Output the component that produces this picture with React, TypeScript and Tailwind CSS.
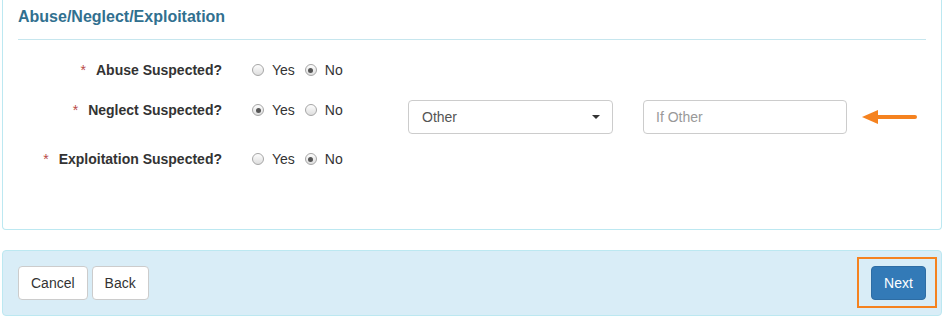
import { useState } from "react";

type Choice = "yes" | "no";

const questions: { key: string; label: string; value: Choice }[] = [
  { key: "abuse", label: "Abuse Suspected?", value: "no" },
  { key: "neglect", label: "Neglect Suspected?", value: "yes" },
  { key: "exploitation", label: "Exploitation Suspected?", value: "no" },
];

function Radio({ checked }: { checked: boolean }) {
  return (
    <span className="flex h-[12px] w-[12px] items-center justify-center rounded-full border border-[#a6a6a6] bg-gradient-to-b from-[#fdfdfd] to-[#dedede]">
      {checked && <span className="h-[5px] w-[5px] rounded-full bg-[#555]" />}
    </span>
  );
}

function YesNo({ value, onChange }: { value: Choice; onChange: (v: Choice) => void }) {
  return (
    <div className="flex h-5 w-[156px] shrink-0 items-center gap-[10px]">
      {(["yes", "no"] as Choice[]).map((opt) => (
        <label key={opt} className="flex cursor-pointer items-center gap-2" onClick={() => onChange(opt)}>
          <Radio checked={value === opt} />
          <span className="text-[14px] leading-5 text-[#333]">{opt === "yes" ? "Yes" : "No"}</span>
        </label>
      ))}
    </div>
  );
}

export default function App() {
  const [answers, setAnswers] = useState<Record<string, Choice>>(
    Object.fromEntries(questions.map((q) => [q.key, q.value]))
  );

  return (
    <div className="min-h-[321px] bg-white pl-[2px] pr-[10px] font-['Liberation_Sans',Arial,sans-serif]">
      {/* Section panel — top edge is scrolled out of view */}
      <div className="h-[230px] rounded-b-[4px] border-x border-b border-[#bce8f1] px-[15px]">
        <div className="border-b border-[#c6e6ee] pt-[7px] pb-[12px]">
          <h3 className="text-[16px] leading-5 font-bold text-[#31708f]">Abuse/Neglect/Exploitation</h3>
        </div>

        <div className="pt-5">
          {questions.map((q, i) => (
            <div key={q.key} className={i === 0 ? "mb-5 flex" : i === 1 ? "mb-[15px] flex" : "flex"}>
              <div className="flex w-[204px] shrink-0 justify-end gap-[10px] text-[14px] leading-5">
                <span className="text-[#b94a48]">*</span>
                <span className="font-bold text-[#333]">{q.label}</span>
              </div>
              <div className="ml-[30px] flex items-start">
                <YesNo
                  value={answers[q.key]}
                  onChange={(v) => setAnswers((a) => ({ ...a, [q.key]: v }))}
                />
                {q.key === "neglect" && answers.neglect === "yes" && (
                  <div className="flex items-center">
                    <div className="flex h-[34px] w-[205px] items-center justify-between rounded-[4px] border border-[#ccc] bg-white pr-[12px] pl-[13px] text-[14px] text-[#555]">
                      <span>Other</span>
                      <span className="h-0 w-0 border-x-[4px] border-t-[4px] border-x-transparent border-t-[#333]" />
                    </div>
                    <input
                      placeholder="If Other"
                      className="ml-[30px] h-[34px] w-[204px] rounded-[4px] border border-[#ccc] px-[12px] text-[14px] text-[#555] outline-none placeholder:text-[#999]"
                    />
                    <svg className="ml-[15px]" width="56" height="16" viewBox="0 0 56 16">
                      <path d="M14 8 H53" stroke="#f5821f" strokeWidth="4" strokeLinecap="round" />
                      <path d="M0 8 L16 1 L16 15 Z" fill="#f5821f" />
                    </svg>
                  </div>
                )}
              </div>
            </div>
          ))}
        </div>
      </div>

      {/* Action bar */}
      <div className="mt-5 flex items-center justify-between rounded-[4px] border border-[#bce8f1] bg-[#d9edf7] p-[15px]">
        <div className="flex gap-[4px]">
          <button className="h-[34px] rounded-[4px] border border-[#ccc] bg-white px-[12px] text-[14px] text-[#333]">
            Cancel
          </button>
          <button className="h-[34px] rounded-[4px] border border-[#ccc] bg-white px-[12px] text-[14px] text-[#333]">
            Back
          </button>
        </div>
        <div className="relative">
          <span className="absolute -top-[9px] -right-[11px] -bottom-[8px] -left-[14px] border-2 border-[#f5821f]" />
          <button className="relative h-[34px] w-[55px] rounded-[4px] border border-[#2e6da4] bg-[#337ab7] text-[14px] text-white">
            Next
          </button>
        </div>
      </div>
    </div>
  );
}
